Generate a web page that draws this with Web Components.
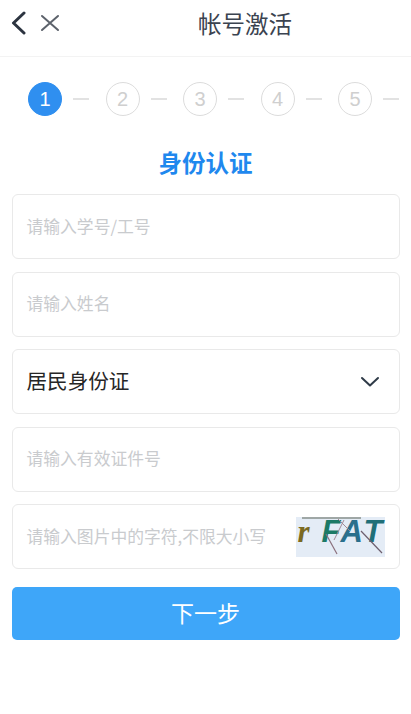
<!DOCTYPE html>
<html lang="zh">
<head>
<meta charset="utf-8">
<title>帐号激活</title>
<style>
  html, body { margin: 0; padding: 0; background: #fff; }
  body { font-family: "Noto Sans CJK SC", "Liberation Sans", sans-serif; }
  activate-form { display: flex; flex-direction: column; gap: 12.5px; padding: 0 11.5px; }
</style>
</head>
<body>
<nav-bar title="帐号激活"></nav-bar>
<step-bar current="1" count="5"></step-bar>
<section-title>身份认证</section-title>
<activate-form>
  <form-field placeholder="请输入学号/工号"></form-field>
  <form-field placeholder="请输入姓名"></form-field>
  <form-field value="居民身份证" select></form-field>
  <form-field placeholder="请输入有效证件号"></form-field>
  <form-field placeholder="请输入图片中的字符,不限大小写"><captcha-image slot="extra"></captcha-image></form-field>
  <submit-button>下一步</submit-button>
</activate-form>

<script>
class NavBar extends HTMLElement {
  constructor() {
    super();
    this.attachShadow({ mode: 'open' });
  }
  connectedCallback() {
    const title = this.getAttribute('title') || '';
    this.shadowRoot.innerHTML = `
      <style>
        :host { display: flex; align-items: flex-start; height: 56px; border-bottom: 1.5px solid #f3f3f3; }
        .icons { display: flex; align-items: center; gap: 13px; padding: 11px 0 0 9px; width: 91px; flex: none; box-sizing: border-box; }
        svg { display: block; fill: none; stroke-linecap: round; stroke-linejoin: round; }
        .title { flex: 1; text-align: center; font-size: 23.5px; color: #3b4350; padding-right: 12px; line-height: 47px; }
      </style>
      <div class="icons">
        <svg width="18" height="24" viewBox="0 0 18 24" stroke="#2c3440" stroke-width="3"><path d="M15 2 L4.5 12 L15 22"/></svg>
        <svg width="20" height="18" viewBox="0 0 20 18" stroke="#5c626b" stroke-width="2"><path d="M2 2 L18 16 M18 2 L2 16"/></svg>
      </div>
      <div class="title">${title}</div>`;
  }
}

class StepBar extends HTMLElement {
  constructor() {
    super();
    this.attachShadow({ mode: 'open' });
  }
  connectedCallback() {
    const count = +this.getAttribute('count');
    const current = +this.getAttribute('current');
    let html = '';
    for (let i = 1; i <= count; i++) {
      html += `<div class="num ${i === current ? 'on' : ''}">${i}</div><div class="dash"></div>`;
    }
    this.shadowRoot.innerHTML = `
      <style>
        :host { display: flex; align-items: center; height: 34px; padding: 25px 0 0 28px; font-family: "Liberation Sans", sans-serif; }
        .num { width: 34px; height: 34px; box-sizing: border-box; border-radius: 50%; border: 1.3px solid #dcdcdc; color: #cfcfcf; font-size: 20px; display: flex; align-items: center; justify-content: center; flex: none; }
        .num.on { background: #2f8ff0; border-color: #2f8ff0; color: #fff; }
        .dash { width: 16px; height: 1.5px; margin: 0 16.5px 0 11px; background: #e2e2e2; flex: none; }
        .dash:last-child { margin-right: 0; }
      </style>
      ${html}`;
  }
}

class SectionTitle extends HTMLElement {
  constructor() {
    super();
    this.attachShadow({ mode: 'open' });
  }
  connectedCallback() {
    this.shadowRoot.innerHTML = `
      <style>
        :host { display: block; text-align: center; font-size: 23.5px; font-weight: 700; color: #1f88ee; line-height: 34px; padding: 29px 0 15px 0; }
      </style>
      <slot></slot>`;
  }
}

class FormField extends HTMLElement {
  constructor() {
    super();
    this.attachShadow({ mode: 'open' });
  }
  connectedCallback() {
    const placeholder = this.getAttribute('placeholder');
    const value = this.getAttribute('value');
    const arrow = this.hasAttribute('select')
      ? `<svg width="20" height="12" viewBox="0 0 20 12" fill="none" stroke="#2f3b48" stroke-width="2" stroke-linecap="round" stroke-linejoin="round"><path d="M2 2 L10 9.5 L18 2"/></svg>`
      : '';
    this.shadowRoot.innerHTML = `
      <style>
        :host { display: flex; align-items: center; justify-content: space-between; height: 65px; box-sizing: border-box; padding: 0 ${arrow ? 19 : 14}px 0 14px; border: 1.5px solid #e9e9e9; border-radius: 6px; background: #fff; }
        .ph { font-size: 16.8px; color: #c9cbce; white-space: nowrap; padding-bottom: 2px; }
        .val { font-size: 20.6px; color: #262626; white-space: nowrap; padding-bottom: 3px; }
      </style>
      <span class="${value ? 'val' : 'ph'}">${value || placeholder}</span>
      ${arrow}
      <slot name="extra"></slot>`;
  }
}

class CaptchaImage extends HTMLElement {
  constructor() {
    super();
    this.attachShadow({ mode: 'open' });
  }
  connectedCallback() {
    this.shadowRoot.innerHTML = `
      <style>
        :host { display: block; width: 89px; height: 40px; position: relative; background: #e4ecf6; font-weight: 700; }
        .letters { display: flex; align-items: center; height: 28px; padding-top: 1px; font-size: 31px; line-height: 28px; font-family: "Liberation Sans", sans-serif; font-style: italic; }
        .r { color: #7b6a22; margin-left: 2px; width: 24px; font-size: 31px; font-family: "Liberation Serif", serif; }
        .f { color: #1c7a66; width: 19px; }
        .a { color: #2a6f8c; width: 23px; }
        .t { color: #1f6f78; }
        svg { position: absolute; left: 0; top: 0; }
      </style>
      <div class="letters"><span class="r">r</span><span class="f">F</span><span class="a">A</span><span class="t">T</span></div>
      <svg width="89" height="40" viewBox="0 0 89 40" fill="none" stroke-width="1">
        <path d="M6 1 L65 1" stroke="#5b6257" stroke-width="1.2"/>
        <path d="M30 17 L41 37" stroke="#8a6f7c" stroke-width="1.2"/>
        <path d="M48 3 L38 23" stroke="#a08a96"/>
        <path d="M42 2 L54 14" stroke="#a08a96"/>
        <path d="M65 14 L86 36" stroke="#6d5f6e" stroke-width="1.2"/>
      </svg>`;
  }
}

class SubmitButton extends HTMLElement {
  constructor() {
    super();
    this.attachShadow({ mode: 'open' });
  }
  connectedCallback() {
    this.shadowRoot.innerHTML = `
      <style>
        :host { display: flex; align-items: center; justify-content: center; height: 53px; box-sizing: border-box; padding-bottom: 3px; margin-top: 5.5px; border-radius: 5px; background: #3ea6f9; color: #fff; font-size: 23px; }
      </style>
      <slot></slot>`;
  }
}

customElements.define('nav-bar', NavBar);
customElements.define('step-bar', StepBar);
customElements.define('section-title', SectionTitle);
customElements.define('form-field', FormField);
customElements.define('captcha-image', CaptchaImage);
customElements.define('submit-button', SubmitButton);
</script>
</body>
</html>
